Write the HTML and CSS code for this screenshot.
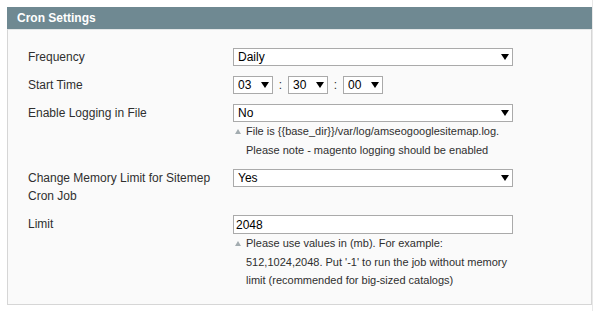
FILE: index.html
```html
<!DOCTYPE html>
<html lang="en">

<head>
  <meta charset="UTF-8">
  <title>Cron Settings</title>
  <link rel="stylesheet" href="styles.css">
</head>

<body>
  <div class="page">
    <div class="section">
      <div class="section-head">
        <h4>Cron Settings</h4>
      </div>
      <div class="fieldset">
        <div class="row">
          <label class="label">Frequency</label>
          <div class="value">
            <span class="select-wrap wide"><select><option>Daily</option></select></span>
          </div>
        </div>

        <div class="row">
          <label class="label">Start Time</label>
          <div class="value time">
            <span class="select-wrap small"><select><option>03</option></select></span>
            <span class="colon">:</span>
            <span class="select-wrap small"><select><option>30</option></select></span>
            <span class="colon">:</span>
            <span class="select-wrap small"><select><option>00</option></select></span>
          </div>
        </div>

        <div class="row">
          <label class="label">Enable Logging in File</label>
          <div class="value">
            <span class="select-wrap wide"><select><option>No</option></select></span>
            <p class="note">File is {{base_dir}}/var/log/amseogooglesitemap.log. Please note - magento logging should be enabled</p>
          </div>
        </div>

        <div class="row">
          <label class="label">Change Memory Limit for Sitemep Cron Job</label>
          <div class="value">
            <span class="select-wrap wide"><select><option>Yes</option></select></span>
          </div>
        </div>

        <div class="row">
          <label class="label">Limit</label>
          <div class="value">
            <input class="input-text" type="text" value="2048">
            <p class="note">Please use values in (mb). For example: 512,1024,2048. Put '-1' to run the job without memory limit (recommended for big-sized catalogs)</p>
          </div>
        </div>
      </div>
    </div>
  </div>
</body>

</html>
```

FILE: styles.css
```css
* {
  margin: 0;
  padding: 0;
  box-sizing: border-box;
}

body {
  background-color: #fff;
  color: #2f2f2f;
  font-family: "Liberation Sans", Arial, sans-serif;
  font-size: 12px;
}

.page {
  width: 593px;
  padding: 7px 0 0 7px;
  border-right: 1px solid #e8e8e8;
  min-height: 311px;
}

.section-head {
  height: 22px;
  padding: 0 10px;
  background-color: #6f8992;
}

.section-head h4 {
  color: #fff;
  font-size: 12px;
  font-weight: bold;
  line-height: 22px;
}

.fieldset {
  border: 1px solid #d6d6d6;
  border-top-color: #e3e6e7;
  background-color: #fafafa;
  padding: 13px 0 9px 20px;
}

.row {
  display: flex;
  padding: 5px 0;
}

.label {
  flex: none;
  width: 200px;
  line-height: 18px;
}

.value {
  padding-left: 5px;
  width: 285px;
}

.value.time {
  display: flex;
  align-items: center;
}

.colon {
  width: 15px;
  text-align: center;
  line-height: 18px;
}

.select-wrap {
  position: relative;
  display: block;
}

.select-wrap.wide {
  width: 280px;
}

.select-wrap.small {
  width: 40px;
}

.select-wrap select {
  display: block;
  width: 100%;
  height: 18px;
  padding: 0 14px 0 4px;
  border: 1px solid #aaa;
  background-color: #fff;
  color: #000;
  font-family: inherit;
  font-size: 12px;
  line-height: 16px;
  appearance: none;
  -webkit-appearance: none;
  border-radius: 0;
}

/* arrow of the select */
.select-wrap::after {
  content: "";
  position: absolute;
  top: 6px;
  right: 4px;
  border-left: 4px solid transparent;
  border-right: 4px solid transparent;
  border-top: 6px solid #000;
  pointer-events: none;
}

.input-text {
  display: block;
  width: 280px;
  height: 19px;
  padding: 0 2px;
  border: 1px solid #aaa;
  background-color: #fff;
  color: #000;
  font-family: inherit;
  font-size: 12px;
}

.note {
  position: relative;
  padding-left: 13px;
  font-size: 11px;
  line-height: 18.5px;
}

.note::before {
  content: "";
  position: absolute;
  left: 2px;
  top: 7px;
  border-left: 3px solid transparent;
  border-right: 3px solid transparent;
  border-bottom: 5px solid #a3acb0;
}
```
